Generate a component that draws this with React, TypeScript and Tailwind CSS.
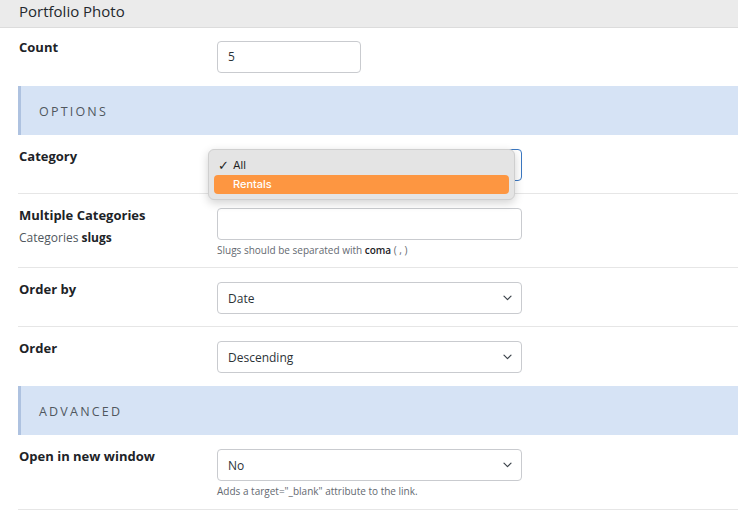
import React from 'react';

function Chevron() {
  return (
    <svg width="9" height="6" viewBox="0 0 9 6" fill="none" className="shrink-0">
      <path d="M1 1.2l3.5 3.5L8 1.2" stroke="#3c434a" strokeWidth="1.2" strokeLinecap="round" strokeLinejoin="round" />
    </svg>
  );
}

function Label({ children }: { children: React.ReactNode }) {
  return <div className="-mt-[1px] text-[13px] font-bold leading-[16px] text-[#1d2327]">{children}</div>;
}

function Help({ children }: { children: React.ReactNode }) {
  return <div className="mt-[3px] text-[10px] leading-[14px] text-[#646970]">{children}</div>;
}

function SelectBox({ value, focused }: { value: string; focused?: boolean }) {
  return (
    <div
      className={`flex h-[32px] w-[305px] items-center justify-between rounded-[4px] border bg-white pl-[10px] pr-[9px] text-[12px] text-[#2c3338] ${
        focused ? 'border-[#3b78c2]' : 'border-[#c9cbcf]'
      }`}
    >
      <span className="pt-[2px]">{value}</span>
      <Chevron />
    </div>
  );
}

function Row({
  label,
  children,
  border = true,
  className = '',
}: {
  label: React.ReactNode;
  children: React.ReactNode;
  border?: boolean;
  className?: string;
}) {
  return (
    <div className={`flex pt-[14px] ${border ? 'border-b border-[#e6e6e6]' : ''} ${className}`}>
      <div className="w-[199px] shrink-0 pl-[1px]">{label}</div>
      <div className="relative">{children}</div>
    </div>
  );
}

function Section({ title }: { title: string }) {
  return (
    <div className="flex h-[49px] items-center border-l-[3px] border-[#aec2e0] bg-[#d6e3f5] pl-[18px] pt-[3px] text-[12.5px] uppercase tracking-[2.2px] text-[#50575e]">
      {title}
    </div>
  );
}

export default function App() {
  return (
    <div className="h-[515px] w-[738px] overflow-hidden bg-white font-['Open_Sans',sans-serif]">
      <div className="h-[28px] border-b border-[#dcdcdc] bg-[#ebebeb] pl-[19px] text-[15px] leading-[23px] text-[#23282d]">
        Portfolio Photo
      </div>
      <div className="pl-[18px]">
        <div className="flex pb-[13px] pt-[13px]">
          <div className="w-[199px] shrink-0 pl-[1px]">
            <div className="-mt-[2px] text-[13px] font-bold leading-[16px] text-[#1d2327]">Count</div>
          </div>
          <div className="flex h-[32px] w-[144px] items-center rounded-[4px] border border-[#c9cbcf] pl-[10px] text-[12px] text-[#2c3338]">
            5
          </div>
        </div>

        <Section title="Options" />

        <Row label={<Label>Category</Label>} className="pb-[12px]">
          {/* select is open: the native menu covers its value */}
          <SelectBox value="" focused />
          <div className="absolute left-[-9px] top-[0px] z-10 h-[51px] w-[307px] rounded-[6px] border border-[#cfcfcf] bg-[#e4e4e4] px-[5px] pt-[6px] font-['Inter',sans-serif] text-[11px] shadow-[0_3px_10px_rgba(0,0,0,0.18)]">
            <div className="flex h-[19px] items-center text-[#1f1f1f]">
              <span className="w-[19px] pl-[4px] font-['DejaVu_Sans',sans-serif] text-[13px] font-bold leading-none">✓</span>
              <span>All</span>
            </div>
            <div className="flex h-[19px] items-center rounded-[4px] bg-[#fd9641] font-medium text-white">
              <span className="w-[19px]"></span>
              <span>Rentals</span>
            </div>
          </div>
        </Row>

        <Row
          className="pb-[10px]"
          label={
            <>
              <Label>Multiple Categories</Label>
              <div className="mt-[7px] text-[12px] leading-[16px] text-[#50575e]">
                Categories <span className="font-bold text-[#1d2327]">slugs</span>
              </div>
            </>
          }
        >
          <div className="h-[32px] w-[305px] rounded-[4px] border border-[#c9cbcf] bg-white" />
          <Help>
            Slugs should be separated with <span className="font-semibold text-[#1d2327]">coma</span> ( , )
          </Help>
        </Row>

        <Row label={<Label>Order by</Label>} className="pb-[12px]">
          <SelectBox value="Date" />
        </Row>

        <Row label={<Label>Order</Label>} border={false} className="pb-[13px]">
          <SelectBox value="Descending" />
        </Row>

        <Section title="Advanced" />

        <Row label={<Label>Open in new window</Label>} className="pb-[11px]">
          <SelectBox value="No" />
          <Help>Adds a target="_blank" attribute to the link.</Help>
        </Row>
      </div>
    </div>
  );
}
